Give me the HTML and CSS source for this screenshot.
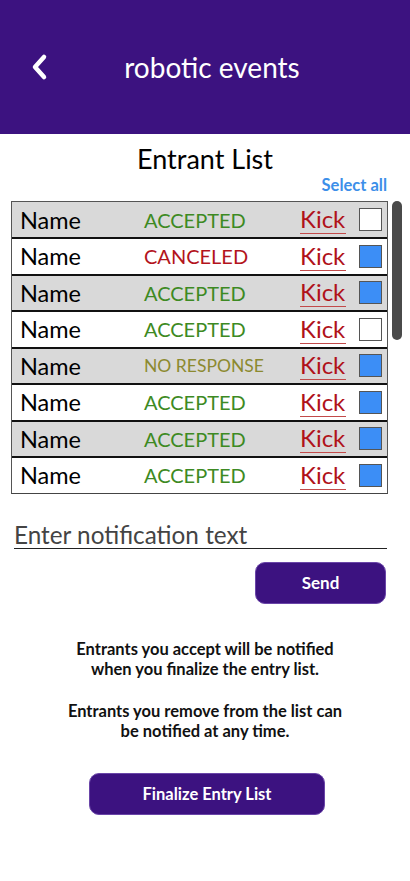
FILE: index.html
```html
<!DOCTYPE html>
<html>
<head>
<meta charset="utf-8">
<link rel="stylesheet" href="styles.css">
</head>
<body>
<header class="topbar">
  <svg class="back" width="20" height="28" viewBox="0 0 20 28"><path d="M14 4 L5 14 L14 24" fill="none" stroke="#fff" stroke-width="4.5" stroke-linecap="round" stroke-linejoin="round"/></svg>
  <h1 class="title">robotic events</h1>
</header>
<main class="content">
  <h2 class="heading">Entrant List</h2>
  <div class="select-all">Select all</div>
  <div class="list-wrap">
    <div class="list">
      <div class="row gray"><span class="name">Name</span><span class="status ok">ACCEPTED</span><span class="kick">Kick</span><span class="box"></span></div>
      <div class="row"><span class="name">Name</span><span class="status bad">CANCELED</span><span class="kick">Kick</span><span class="box on"></span></div>
      <div class="row gray"><span class="name">Name</span><span class="status ok">ACCEPTED</span><span class="kick">Kick</span><span class="box on"></span></div>
      <div class="row"><span class="name">Name</span><span class="status ok">ACCEPTED</span><span class="kick">Kick</span><span class="box"></span></div>
      <div class="row gray"><span class="name">Name</span><span class="status none">NO RESPONSE</span><span class="kick">Kick</span><span class="box on"></span></div>
      <div class="row"><span class="name">Name</span><span class="status ok">ACCEPTED</span><span class="kick">Kick</span><span class="box on"></span></div>
      <div class="row gray"><span class="name">Name</span><span class="status ok">ACCEPTED</span><span class="kick">Kick</span><span class="box on"></span></div>
      <div class="row"><span class="name">Name</span><span class="status ok">ACCEPTED</span><span class="kick">Kick</span><span class="box on"></span></div>
    </div>
    <div class="scrollbar"></div>
  </div>
  <div class="notify">Enter notification text</div>
  <div class="send-row"><button class="btn send">Send</button></div>
  <p class="info">Entrants you accept will be notified<br>when you finalize the entry list.</p>
  <p class="info">Entrants you remove from the list can<br>be notified at any time.</p>
  <div class="final-row"><button class="btn final">Finalize Entry List</button></div>
</main>
</body>
</html>
```
FILE: styles.css
```css
* { box-sizing: border-box; }
body {
  margin: 0;
  font-family: Lato, "Open Sans", sans-serif;
  background: #fff;
  color: #000;
}
.topbar {
  height: 134px;
  background: #3c1280;
  display: flex;
  align-items: center;
  position: relative;
  padding-left: 30px;
}
.back { margin-top: -1px; }
.title {
  position: absolute;
  left: 0; right: 0;
  text-align: center;
  margin: 0;
  font-weight: 400;
  font-size: 28px;
  color: #fff;
  top: 50px;
  margin-left: 14px;
  pointer-events: none;
}
.content { padding: 0 0 0 11px; }
.heading {
  margin: 10px 0 0;
  text-align: center;
  font-weight: 400;
  font-size: 27px;
  line-height: 30px;
  padding-right: 11px;
}
.select-all {
  text-align: right;
  padding-right: 23px;
  color: #3d8fe9;
  font-weight: 700;
  font-size: 16.5px;
  line-height: 18px;
  margin-top: 2px;
}
.list-wrap {
  display: flex;
  gap: 4px;
  margin-top: 7px;
}
.list {
  width: 377px;
  border: 1px solid #555;
  border-bottom-color: #444;
}
.row {
  height: 36.5px;
  display: flex;
  align-items: center;
  background: #fff;
  border-top: 2px solid #111;
  padding-left: 8px;
}
.row:first-child { border-top: none; height: 35px; }
.row.gray { background: #d9d9d9; }
.name {
  font-size: 23.5px;
  width: 124px;
}
.status {
  font-size: 20px;
  width: 156px;
}
.status.ok { color: #3d8a23; }
.status.bad { color: #b3141c; }
.status.none { color: #8c8a30; font-size: 17.5px; }
.kick {
  font-size: 24px;
  color: #b0121a;
  line-height: 28px;
  border-bottom: 1.5px solid #c24a4a;
  width: 46px;
}
.box {
  width: 23px;
  height: 23px;
  margin-left: 13px;
  border: 1.5px solid #555;
  background: #fff;
}
.box.on { background: #3c8ef6; }
.scrollbar {
  width: 10px;
  height: 139px;
  background: #4a4a4a;
  border-radius: 5px;
}
.notify {
  margin-top: 28px;
  width: 373px;
  margin-left: 3px;
  font-size: 24.3px;
  color: #444;
  line-height: 26px;
  border-bottom: 1.5px solid #222;
}
.send-row {
  display: flex;
  justify-content: flex-end;
  padding-right: 24px;
  margin-top: 13px;
}
.btn {
  background: #3c1280;
  color: #fff;
  border: 1px solid #6a45a8;
  border-radius: 10px;
  font-family: Lato, sans-serif;
  font-weight: 700;
  font-size: 17px;
  height: 42px;
}
.send { width: 131px; }
.info {
  margin: 0;
  text-align: center;
  font-weight: 700;
  font-size: 16.5px;
  line-height: 20px;
  color: #111;
  padding-right: 11px;
}
.send-row + .info { margin-top: 35px; }
.info + .info { margin-top: 22px; }
.final-row {
  display: flex;
  justify-content: center;
  margin-top: 32px;
  padding-right: 7px;
}
.final { width: 236px; font-size: 16.5px; }
```
